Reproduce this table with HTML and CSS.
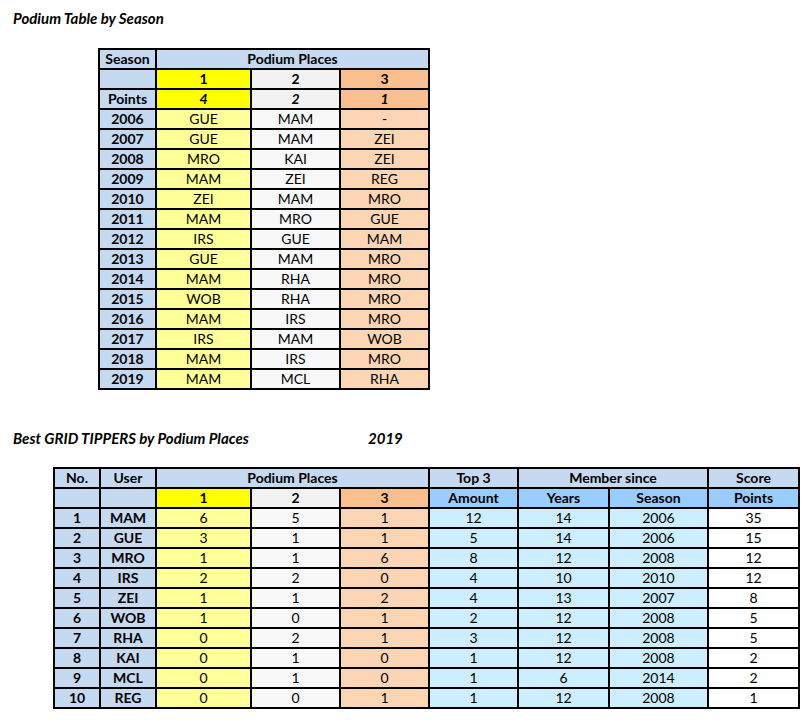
FILE: index.html
```html
<!DOCTYPE html>
<html>
<head>
<meta charset="utf-8">
<link rel="stylesheet" href="styles.css">
</head>
<body>
<div class="page">
  <div class="title t1">Podium Table by Season</div>
  <table class="grid g1">
    <colgroup>
      <col class="w55"><col class="w93"><col class="w87"><col class="w87">
    </colgroup>
    <tr><th class="hb">Season</th><th class="hb" colspan="3">Podium Places</th></tr>
    <tr><th class="hb"></th><th class="p1h">1</th><th class="p2h">2</th><th class="p3h">3</th></tr>
    <tr><th class="hb">Points</th><th class="p1h it">4</th><th class="p2h it">2</th><th class="p3h it">1</th></tr>
    <tr><th class="hb">2006</th><td class="p1">GUE</td><td class="p2">MAM</td><td class="p3">-</td></tr>
    <tr><th class="hb">2007</th><td class="p1">GUE</td><td class="p2">MAM</td><td class="p3">ZEI</td></tr>
    <tr><th class="hb">2008</th><td class="p1">MRO</td><td class="p2">KAI</td><td class="p3">ZEI</td></tr>
    <tr><th class="hb">2009</th><td class="p1">MAM</td><td class="p2">ZEI</td><td class="p3">REG</td></tr>
    <tr><th class="hb">2010</th><td class="p1">ZEI</td><td class="p2">MAM</td><td class="p3">MRO</td></tr>
    <tr><th class="hb">2011</th><td class="p1">MAM</td><td class="p2">MRO</td><td class="p3">GUE</td></tr>
    <tr><th class="hb">2012</th><td class="p1">IRS</td><td class="p2">GUE</td><td class="p3">MAM</td></tr>
    <tr><th class="hb">2013</th><td class="p1">GUE</td><td class="p2">MAM</td><td class="p3">MRO</td></tr>
    <tr><th class="hb">2014</th><td class="p1">MAM</td><td class="p2">RHA</td><td class="p3">MRO</td></tr>
    <tr><th class="hb">2015</th><td class="p1">WOB</td><td class="p2">RHA</td><td class="p3">MRO</td></tr>
    <tr><th class="hb">2016</th><td class="p1">MAM</td><td class="p2">IRS</td><td class="p3">MRO</td></tr>
    <tr><th class="hb">2017</th><td class="p1">IRS</td><td class="p2">MAM</td><td class="p3">WOB</td></tr>
    <tr><th class="hb">2018</th><td class="p1">MAM</td><td class="p2">IRS</td><td class="p3">MRO</td></tr>
    <tr><th class="hb">2019</th><td class="p1">MAM</td><td class="p2">MCL</td><td class="p3">RHA</td></tr>
  </table>

  <div class="title t2"><span class="label">Best GRID TIPPERS by Podium Places</span><span class="year">2019</span></div>
  <table class="grid g2">
    <colgroup>
      <col class="w44"><col class="w54"><col class="w93"><col class="w87"><col class="w87">
      <col class="w87"><col class="w89"><col class="w97"><col class="w89">
    </colgroup>
    <tr>
      <th class="hb">No.</th><th class="hb">User</th><th class="hb" colspan="3">Podium Places</th>
      <th class="hb">Top 3</th><th class="hb" colspan="2">Member since</th><th class="hb">Score</th>
    </tr>
    <tr>
      <th class="hb"></th><th class="hb"></th><th class="p1h">1</th><th class="p2h">2</th><th class="p3h">3</th>
      <th class="hd">Amount</th><th class="hd">Years</th><th class="hd">Season</th><th class="hd">Points</th>
    </tr>
    <tr><th class="hb">1</th><th class="hb">MAM</th><td class="p1">6</td><td class="p2">5</td><td class="p3">1</td><td class="lb">12</td><td class="lb">14</td><td class="lb">2006</td><td class="wh">35</td></tr>
    <tr><th class="hb">2</th><th class="hb">GUE</th><td class="p1">3</td><td class="p2">1</td><td class="p3">1</td><td class="lb">5</td><td class="lb">14</td><td class="lb">2006</td><td class="wh">15</td></tr>
    <tr><th class="hb">3</th><th class="hb">MRO</th><td class="p1">1</td><td class="p2">1</td><td class="p3">6</td><td class="lb">8</td><td class="lb">12</td><td class="lb">2008</td><td class="wh">12</td></tr>
    <tr><th class="hb">4</th><th class="hb">IRS</th><td class="p1">2</td><td class="p2">2</td><td class="p3">0</td><td class="lb">4</td><td class="lb">10</td><td class="lb">2010</td><td class="wh">12</td></tr>
    <tr><th class="hb">5</th><th class="hb">ZEI</th><td class="p1">1</td><td class="p2">1</td><td class="p3">2</td><td class="lb">4</td><td class="lb">13</td><td class="lb">2007</td><td class="wh">8</td></tr>
    <tr><th class="hb">6</th><th class="hb">WOB</th><td class="p1">1</td><td class="p2">0</td><td class="p3">1</td><td class="lb">2</td><td class="lb">12</td><td class="lb">2008</td><td class="wh">5</td></tr>
    <tr><th class="hb">7</th><th class="hb">RHA</th><td class="p1">0</td><td class="p2">2</td><td class="p3">1</td><td class="lb">3</td><td class="lb">12</td><td class="lb">2008</td><td class="wh">5</td></tr>
    <tr><th class="hb">8</th><th class="hb">KAI</th><td class="p1">0</td><td class="p2">1</td><td class="p3">0</td><td class="lb">1</td><td class="lb">12</td><td class="lb">2008</td><td class="wh">2</td></tr>
    <tr><th class="hb">9</th><th class="hb">MCL</th><td class="p1">0</td><td class="p2">1</td><td class="p3">0</td><td class="lb">1</td><td class="lb">6</td><td class="lb">2014</td><td class="wh">2</td></tr>
    <tr><th class="hb">10</th><th class="hb">REG</th><td class="p1">0</td><td class="p2">0</td><td class="p3">1</td><td class="lb">1</td><td class="lb">12</td><td class="lb">2008</td><td class="wh">1</td></tr>
  </table>
</div>
</body>
</html>
```
FILE: styles.css
```css
html, body {
  margin: 0;
  padding: 0;
  background: #ffffff;
}
body {
  font-family: Lato, "Liberation Sans", sans-serif;
  font-size: 14px;
  color: #000;
}
.page {
  padding-top: 10px;
}
.title {
  font-weight: bold;
  font-style: italic;
  font-size: 15px;
  line-height: 17px;
  padding-left: 13px;
}
.t2 {
  display: flex;
  margin-top: 40px;
}
.t2 .label {
  width: 355px;
}
.grid {
  border-collapse: separate;
  border-spacing: 2px;
  background: #000;
  table-layout: fixed;
}
.g1 {
  margin: 21px 0 0 98px;
}
.g2 {
  margin: 20px 0 0 53px;
}
.grid th, .grid td {
  padding: 0;
  height: 18px;
  line-height: 18px;
  text-align: center;
  white-space: nowrap;
  overflow: hidden;
}
.grid th { font-weight: bold; }
.grid td { font-weight: normal; }
.it { font-style: italic; }
.w44 { width: 44px; }
.w54 { width: 54px; }
.w55 { width: 55px; }
.w87 { width: 87px; }
.w89 { width: 89px; }
.w93 { width: 93px; }
.w97 { width: 97px; }
.hb { background: #c5d9f1; }
.hd { background: #99ccff; }
.p1h { background: #ffff00; }
.p2h { background: #f2f2f2; }
.p3h { background: #fabf8f; }
.p1 { background: #ffff99; }
.p2 { background: #f8f8f8; }
.p3 { background: #fcd5b4; }
.lb { background: #cceeff; }
.wh { background: #ffffff; }
```
